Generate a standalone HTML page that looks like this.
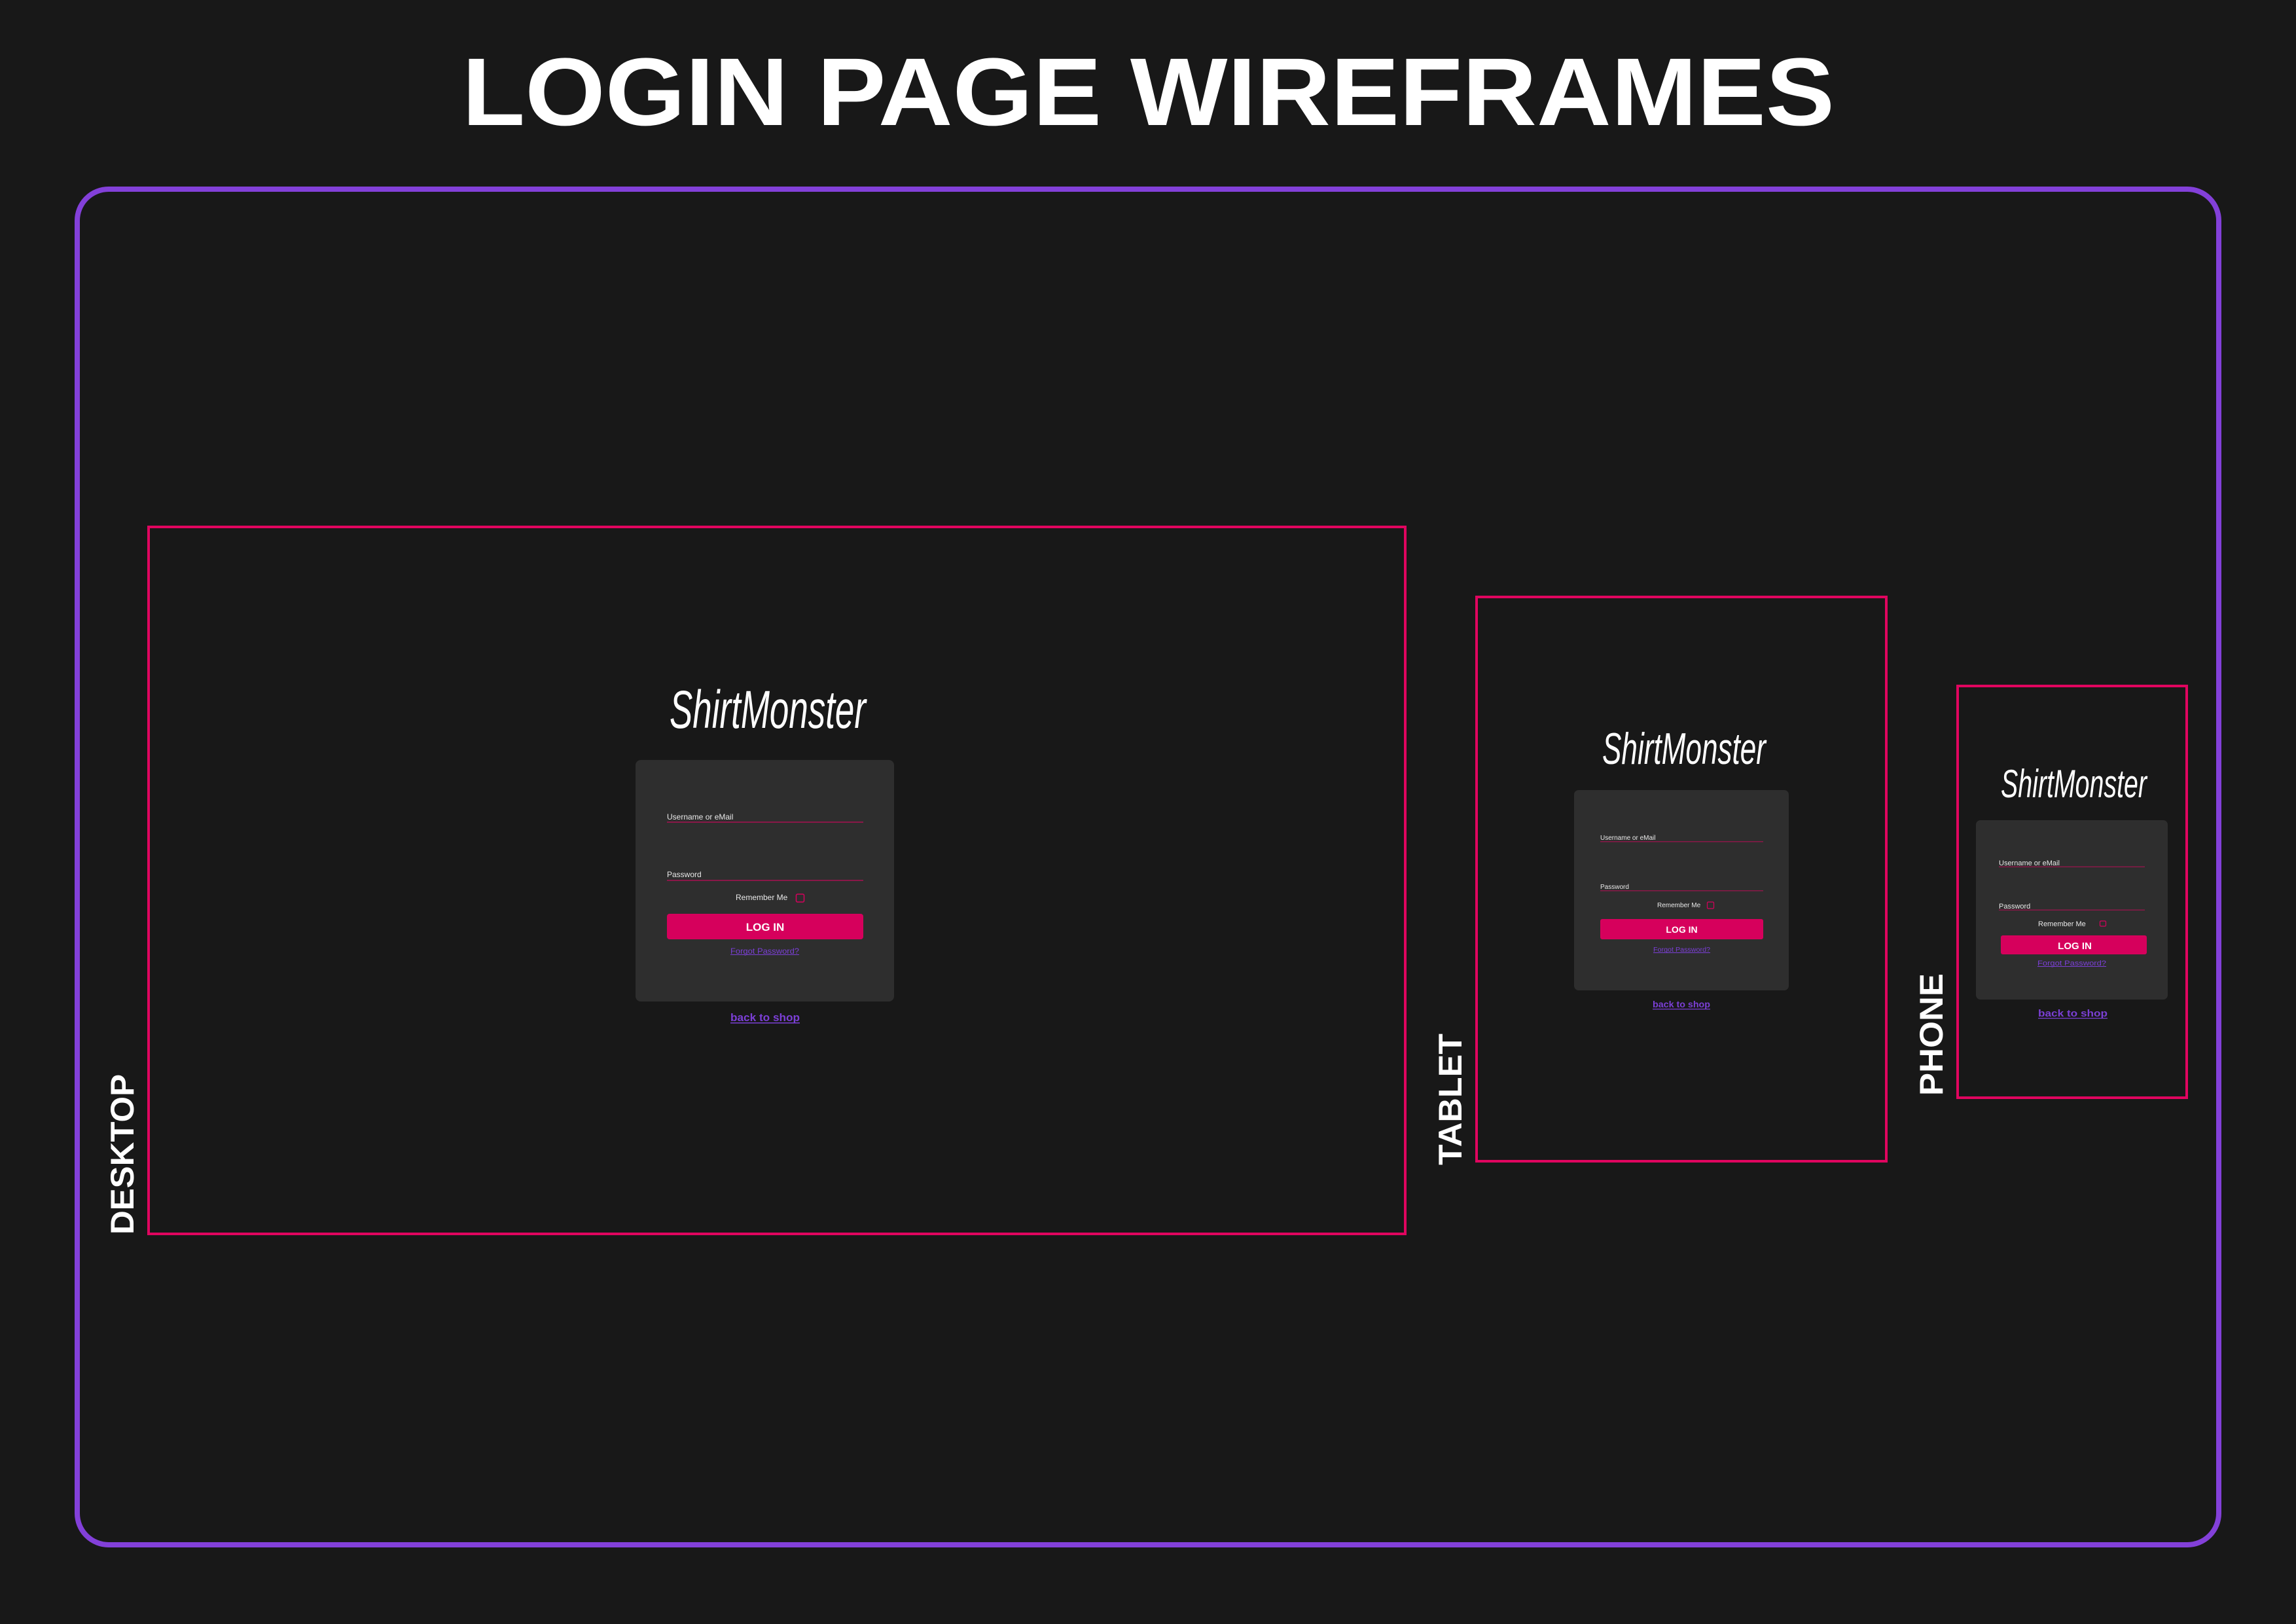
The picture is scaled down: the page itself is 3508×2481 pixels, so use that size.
<!DOCTYPE html>
<html><head><meta charset="utf-8"><style>
html,body{margin:0;padding:0;background:#181818;}
svg{display:block;}
text{font-family:"Liberation Sans",sans-serif;}
</style></head><body>
<svg width="3508" height="2481" viewBox="0 0 3508 2481" xmlns="http://www.w3.org/2000/svg">
<rect width="3508" height="2481" fill="#181818"/>
<text x="706" y="191" font-size="147" font-weight="700" fill="#fff" textLength="2097" lengthAdjust="spacingAndGlyphs">LOGIN PAGE WIREFRAMES</text>
<rect x="118" y="289" width="3272" height="2071" rx="48" fill="none" stroke="#8340d9" stroke-width="8"/>

<!-- DESKTOP -->
<rect x="227" y="805" width="1920" height="1080" fill="none" stroke="#e0055f" stroke-width="4"/>
<text transform="translate(204,1886) rotate(-90)" font-size="50" font-weight="700" fill="#fff" textLength="245" lengthAdjust="spacingAndGlyphs">DESKTOP</text>
<text x="1023" y="1112" font-size="82" font-style="italic" fill="#fff" textLength="300" lengthAdjust="spacingAndGlyphs">ShirtMonster</text>
<rect x="971" y="1161" width="395" height="369" rx="8" fill="#2e2e2e"/>
<text x="1019" y="1252" font-size="12" fill="#e8e8e8">Username or eMail</text>
<rect x="1019" y="1255" width="300" height="2" fill="#8a1848"/>
<text x="1019" y="1340" font-size="12" fill="#e8e8e8">Password</text>
<rect x="1019" y="1344" width="300" height="2" fill="#8a1848"/>
<text x="1124" y="1375" font-size="12" fill="#e8e8e8">Remember Me</text>
<rect x="1216.5" y="1366" width="12" height="12" rx="2" fill="none" stroke="#d6005c" stroke-width="1.5"/>
<rect x="1019" y="1396" width="300" height="39" rx="4" fill="#d6005c"/>
<text x="1169" y="1422" font-size="17" font-weight="700" fill="#fff" text-anchor="middle">LOG IN</text>
<text x="1116" y="1457" font-size="12" fill="#7b3fd6" textLength="105" lengthAdjust="spacingAndGlyphs">Forgot Password?</text>
<rect x="1116" y="1458" width="105" height="1" fill="#7b3fd6"/>
<text x="1116" y="1560" font-size="17" font-weight="700" fill="#7b3fd6" textLength="106" lengthAdjust="spacingAndGlyphs">back to shop</text>
<rect x="1116" y="1562" width="106" height="1.5" fill="#7b3fd6"/>

<!-- TABLET -->
<rect x="2256" y="912" width="626" height="862" fill="none" stroke="#e0055f" stroke-width="4"/>
<text transform="translate(2233,1780) rotate(-90)" font-size="50" font-weight="700" fill="#fff" textLength="201" lengthAdjust="spacingAndGlyphs">TABLET</text>
<text x="2448" y="1167" font-size="68" font-style="italic" fill="#fff" textLength="250" lengthAdjust="spacingAndGlyphs">ShirtMonster</text>
<rect x="2405" y="1207" width="328" height="306" rx="7" fill="#2e2e2e"/>
<text x="2445" y="1283" font-size="10" fill="#e8e8e8">Username or eMail</text>
<rect x="2445" y="1285" width="249" height="1.5" fill="#8a1848"/>
<text x="2445" y="1358" font-size="10" fill="#e8e8e8">Password</text>
<rect x="2445" y="1360" width="249" height="1.5" fill="#8a1848"/>
<text x="2532" y="1386" font-size="10" fill="#e8e8e8">Remember Me</text>
<rect x="2608.5" y="1378" width="10" height="10" rx="1.5" fill="none" stroke="#d6005c" stroke-width="1.2"/>
<rect x="2445" y="1404" width="249" height="31" rx="3" fill="#d6005c"/>
<text x="2569.5" y="1425" font-size="14" font-weight="700" fill="#fff" text-anchor="middle">LOG IN</text>
<text x="2526" y="1454" font-size="10" fill="#7b3fd6" textLength="87" lengthAdjust="spacingAndGlyphs">Forgot Password?</text>
<rect x="2526" y="1455" width="87" height="1" fill="#7b3fd6"/>
<text x="2525" y="1539" font-size="14" font-weight="700" fill="#7b3fd6" textLength="88" lengthAdjust="spacingAndGlyphs">back to shop</text>
<rect x="2525" y="1541" width="88" height="1.2" fill="#7b3fd6"/>

<!-- PHONE -->
<rect x="2991" y="1048" width="350" height="629" fill="none" stroke="#e0055f" stroke-width="4"/>
<text transform="translate(2968,1674) rotate(-90)" font-size="50" font-weight="700" fill="#fff" textLength="187" lengthAdjust="spacingAndGlyphs">PHONE</text>
<text x="3057" y="1218" font-size="60" font-style="italic" fill="#fff" textLength="223" lengthAdjust="spacingAndGlyphs">ShirtMonster</text>
<rect x="3019" y="1253" width="293" height="274" rx="7" fill="#2e2e2e"/>
<text x="3054" y="1322" font-size="11" fill="#e8e8e8">Username or eMail</text>
<rect x="3054" y="1323.5" width="223" height="1.5" fill="#8a1848"/>
<text x="3054" y="1388" font-size="11" fill="#e8e8e8">Password</text>
<rect x="3054" y="1389.5" width="223" height="1.5" fill="#8a1848"/>
<text x="3114" y="1415" font-size="11" fill="#e8e8e8">Remember Me</text>
<rect x="3208.5" y="1407" width="9" height="8" rx="1.5" fill="none" stroke="#d6005c" stroke-width="1.2"/>
<rect x="3057" y="1429" width="223" height="29" rx="3" fill="#d6005c"/>
<text x="3170" y="1450" font-size="15" font-weight="700" fill="#fff" text-anchor="middle">LOG IN</text>
<text x="3113" y="1475" font-size="11" fill="#7b3fd6" textLength="105" lengthAdjust="spacingAndGlyphs">Forgot Password?</text>
<rect x="3113" y="1476" width="105" height="1" fill="#7b3fd6"/>
<text x="3114" y="1553" font-size="15" font-weight="700" fill="#7b3fd6" textLength="106" lengthAdjust="spacingAndGlyphs">back to shop</text>
<rect x="3114" y="1555" width="106" height="1.2" fill="#7b3fd6"/>
</svg>
</body></html>
